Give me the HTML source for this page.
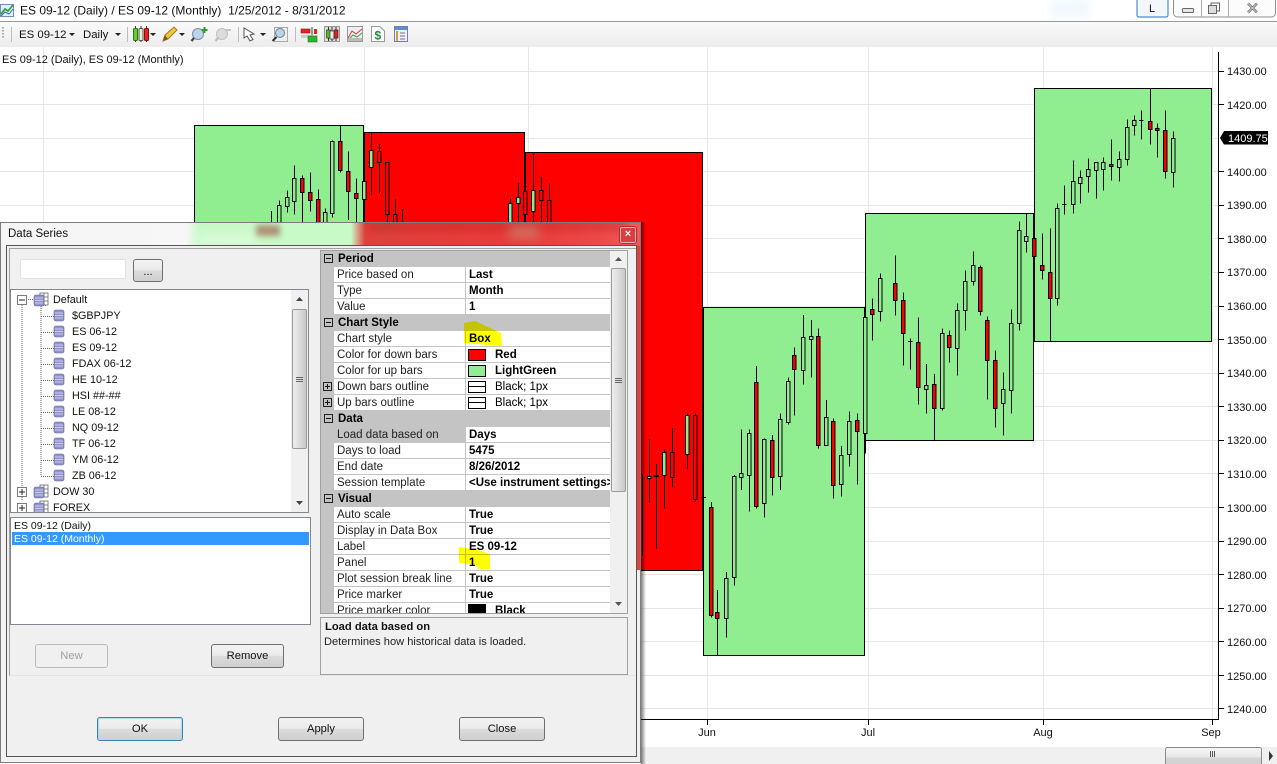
<!DOCTYPE html>
<html><head><meta charset="utf-8"><style>
html,body{margin:0;padding:0;background:#fff}
#p{position:relative;width:1277px;height:764px;overflow:hidden;background:#fff;font-family:"Liberation Sans",sans-serif;color:#000}
#p div,#p span{position:absolute;white-space:nowrap}
.btn{border:1px solid #707070;border-radius:3px;background:linear-gradient(#f3f3f3 0,#ebebeb 48%,#dcdcdc 50%,#cfcfcf 100%);text-align:center;font-size:11.2px;line-height:22px;box-sizing:border-box;color:#111}
.c{left:320px;width:290px;height:16px;background:#c4c4c4;font-weight:bold;font-size:11.5px;line-height:17px}
.c span{left:17px}
.pm{left:3px;top:3px;width:9px;height:9px;border:1px solid #222;box-sizing:border-box;background:#fff0}
.pm:before{content:"";position:absolute;left:1px;top:3px;width:5px;height:1px;background:#111}
.pp:after{content:"";position:absolute;left:3px;top:1px;width:1px;height:5px;background:#111}
.r{left:334px;width:276px;height:15px;background:#fff;border-bottom:1px solid #c4c4c4;font-size:11.5px;line-height:17px;color:#222}
.r span{left:3px}
.r b{position:absolute;left:135px;color:#000;font-weight:bold;white-space:nowrap}
.t{font-size:10.8px;line-height:18px;color:#111}
.sw{left:134px;top:2px;width:18px;height:12px;border:1px solid #000;box-sizing:border-box}
</style></head><body><div id="p">

<svg width="1277" height="764" style="position:absolute;left:0;top:0" font-family="Liberation Sans, sans-serif">
<defs>
<linearGradient id="tb" x1="0" y1="0" x2="0" y2="1"><stop offset="0" stop-color="#fafafa"/><stop offset="1" stop-color="#ececec"/></linearGradient>
<linearGradient id="lb" x1="0" y1="0" x2="0" y2="1"><stop offset="0" stop-color="#f7f7f7"/><stop offset=".5" stop-color="#e6e6e6"/><stop offset=".5" stop-color="#d6d6d6"/><stop offset="1" stop-color="#cfcfcf"/></linearGradient>
<filter id="bl"><feGaussianBlur stdDeviation="4"/></filter>
<linearGradient id="sh" x1="0" y1="0" x2="1" y2="0"><stop offset="0" stop-color="#000" stop-opacity=".5"/><stop offset="1" stop-color="#000" stop-opacity="0"/></linearGradient>
</defs>
<rect x="1050" y="0" width="40" height="18" fill="#f0f9fd" filter="url(#bl)"/>
<rect x="0" y="21" width="1277" height="1" fill="#9a9a9a"/>
<rect x="0" y="22" width="1277" height="25" fill="url(#tb)"/>
<!-- grid -->
<path stroke="#e6e6e6" fill="none" d="M0 71.500H1218M0 104.500H1218M0 138.500H1218M0 171.500H1218M0 205.500H1218M0 238.500H1218M0 272.500H1218M0 306.500H1218M0 339.500H1218M0 373.500H1218M0 406.500H1218M0 440.500H1218M0 473.500H1218M0 507.500H1218M0 541.500H1218M0 574.500H1218M0 608.500H1218M0 641.500H1218M0 675.500H1218M0 708.500H1218M43.500 47V719M203.500 47V719M364.500 47V719M528.500 47V719M707.500 47V719M868.500 47V719M1043.500 47V719M1212.500 47V719"/>
<!-- boxes -->
<g stroke="#000" stroke-width="1">
<rect x="194.500" y="125.500" width="169" height="400" fill="#90ee90"/>
<rect x="364.500" y="132.500" width="160" height="400" fill="#f00"/>
<rect x="525.500" y="152.500" width="177" height="418" fill="#f00"/>
<rect x="703.500" y="307.500" width="161" height="348" fill="#90ee90"/>
<rect x="865.500" y="213.500" width="168" height="227" fill="#90ee90"/>
<rect x="1034.500" y="88.500" width="177" height="253" fill="#90ee90"/>
</g>
<!-- candles: left -->
<g transform="translate(190,85) scale(.33333)" stroke="#000" stroke-width="3" shape-rendering="crispEdges">
<path fill="none" d="M244 378V420M268 346V420M292 316V383M313 241V389M337 271V420M361 262V380M385 313V420M406 370V420M427 166V398M451 122V263M475 199V405M499 280V420M544 142V332M568 178V326M592 232V420M616 343V420M637 372V420M961 340V420M985 292V420M1006 202V420"/>
<path fill="#90ee90" d="M262.500 361h11V420h-11zM286.500 337h11V364h-11zM307.500 280h11V349h-11zM400.500 382h11V420h-11zM421.500 169h11V385h-11zM517.500 289h11V343h-11zM538.500 196h11V247h-11zM955.500 355h11V420h-11zM979.500 337h11V355h-11z"/>
<path fill="#f00" d="M331.500 280h11V322h-11zM355.500 322h11V346h-11zM379.500 343h11V420h-11zM445.500 169h11V256h-11zM469.500 259h11V319h-11zM493.500 325h11V340h-11zM562.500 199h11V232h-11zM586.500 232h11V388h-11zM610.500 388h11V420h-11zM1000.500 319h11V388h-11z"/>
</g>
<g transform="translate(500,150) scale(.33333)" stroke="#000" stroke-width="3" shape-rendering="crispEdges">
<path fill="none" d="M100 8V220M124 79V220M148 100V220"/>
<path fill="#90ee90" d="M94.500 121h11V184h-11z"/>
<path fill="#f00" d="M118.500 121h11V151h-11zM142.500 151h11V220h-11z"/>
</g>
<!-- candles: June -->
<g transform="translate(640,300) scale(.33333)" stroke="#000" stroke-width="3" shape-rendering="crispEdges">
<path fill="none" d="M7 525V767M28 418V608M49 492V746M73 448V626M97 384V563M142 340V509M166 340V605M184 592H198M214 606V952M232 870V1066M259 816V1013M283 525V857M304 388V570M328 388V635M349 198V625M373 415V653M397 405V587M421 340V570M445 232V374M463 142V347M490 45V254M514 60V233M535 85V446M559 300V436M580 355V596M604 438V590M628 334V500M652 340V554M676 0V460"/>
<path fill="#90ee90" d="M22.500 529h11V535h-11zM67.500 457h11V526h-11zM136.500 346h11V463h-11zM253.500 835h11V955h-11zM277.500 529h11V832h-11zM298.500 520h11V532h-11zM322.500 400h11V526h-11zM367.500 418h11V610h-11zM415.500 358h11V529h-11zM439.500 244h11V367h-11zM484.500 112h11V211h-11zM508.500 109h11V118h-11zM553.500 352h11V436h-11zM598.500 466h11V553h-11zM622.500 364h11V463h-11zM670.500 52h11V400h-11z"/>
<path fill="#f00" d="M42.500 526h13V529h-13zM91.500 457h11V532h-11zM160.500 346h11V598h-11zM208.500 622h11V946h-11zM226.500 938h11V955h-11zM343.500 247h11V620h-11zM391.500 421h11V532h-11zM457.500 166h11V208h-11zM529.500 109h11V436h-11zM574.500 364h11V556h-11zM646.500 361h11V394h-11z"/>
</g>
<!-- candles: July -->
<g transform="translate(860,210) scale(.33333)" stroke="#000" stroke-width="3" shape-rendering="crispEdges">
<path fill="none" d="M37 265V392M61 190V335M106 136V317M130 247V467M151 385V479M144 394H158M175 322V584M199 462V611M223 492V690M247 355V602M268 361V458M292 280V497M316 181V362M340 124V227M361 166V317M382 319V569M406 421V653M430 487V677M454 298V611M478 34V362M499 10V127"/>
<path fill="#90ee90" d="M55.500 205h11V304h-11zM193.500 526h11V539h-11zM241.500 370h11V595h-11zM286.500 301h11V415h-11zM310.500 214h11V301h-11zM334.500 166h11V214h-11zM424.500 538h11V580h-11zM448.500 340h11V541h-11zM472.500 61h11V340h-11zM493.500 79h11V94h-11z"/>
<path fill="#f00" d="M31.500 298h11V313h-11zM100.500 220h11V271h-11zM124.500 271h11V371h-11zM169.500 397h11V532h-11zM217.500 523h11V595h-11zM262.500 376h11V412h-11zM355.500 172h11V304h-11zM376.500 331h11V451h-11zM400.500 451h11V595h-11z"/>
</g>
<!-- candles: Aug -->
<g transform="translate(1030,85) scale(.33333)" stroke="#000" stroke-width="3" shape-rendering="crispEdges">
<path fill="none" d="M37 445V584M61 430V769M82 355V662M103 301V389M96 358H110M130 226V386M151 256V356M175 220V323M199 232V341M220 217V317M244 163V287M268 199V290M292 103V242M313 91V152M334 76V164M327 107H341M361 10V179M382 115V218M406 76V281M430 139V308"/>
<path fill="#90ee90" d="M76.500 370h11V640h-11zM124.500 289h11V358h-11zM145.500 277h11V295h-11zM169.500 253h11V274h-11zM193.500 232h11V256h-11zM214.500 232h11V253h-11zM262.500 223h11V247h-11zM286.500 127h11V223h-11zM307.500 106h11V121h-11zM424.500 160h11V262h-11z"/>
<path fill="#f00" d="M7.500 460h11V515h-11zM31.500 541h11V556h-11zM55.500 562h11V640h-11zM238.500 238h11V244h-11zM355.500 109h11V133h-11zM376.500 130h11V136h-11zM400.500 136h11V259h-11z"/>
</g>
<!-- axes -->
<path stroke="#000" fill="none" d="M1218.500 52V720M640 719.500H1219M707.500 719V725M868.500 719V725M1043.500 719V725M1212.500 719V725M1218 71.500H1224M1218 104.500H1224M1218 171.500H1224M1218 205.500H1224M1218 238.500H1224M1218 272.500H1224M1218 306.500H1224M1218 339.500H1224M1218 373.500H1224M1218 406.500H1224M1218 440.500H1224M1218 473.500H1224M1218 507.500H1224M1218 541.500H1224M1218 574.500H1224M1218 608.500H1224M1218 641.500H1224M1218 675.500H1224M1218 708.500H1224"/>
<g font-size="11" fill="#111">
<text x="1227" y="75">1430.00</text><text x="1227" y="109">1420.00</text><text x="1227" y="176">1400.00</text><text x="1227" y="209">1390.00</text><text x="1227" y="243">1380.00</text><text x="1227" y="276">1370.00</text><text x="1227" y="310">1360.00</text><text x="1227" y="344">1350.00</text><text x="1227" y="377">1340.00</text><text x="1227" y="411">1330.00</text><text x="1227" y="444">1320.00</text><text x="1227" y="478">1310.00</text><text x="1227" y="512">1300.00</text><text x="1227" y="545">1290.00</text><text x="1227" y="579">1280.00</text><text x="1227" y="612">1270.00</text><text x="1227" y="646">1260.00</text><text x="1227" y="680">1250.00</text><text x="1227" y="713">1240.00</text>
<text x="707" y="736" text-anchor="middle">Jun</text><text x="868" y="736" text-anchor="middle">Jul</text><text x="1043" y="736" text-anchor="middle">Aug</text><text x="1211" y="736" text-anchor="middle">Sep</text>
<text x="2" y="63">ES 09-12 (Daily), ES 09-12 (Monthly)</text>
</g>
<path d="M1220 138L1224 131H1268V144.500H1224Z" fill="#000"/>
<text x="1228" y="142" font-size="11" fill="#fff">1409.75</text>
<!-- title -->
<g>
<rect x="0.500" y="4.500" width="13" height="12" fill="#dff0fa" stroke="#6f8fb5"/>
<path d="M1 14L5 9L8 11L13 5" stroke="#2e9a2e" stroke-width="1.600" fill="none"/>
<path d="M1 16L5 12L9 14L13 9" stroke="#3465b5" fill="none"/>
</g>
<text x="20" y="14.500" font-size="12" fill="#111">ES 09-12 (Daily) / ES 09-12 (Monthly)&#160; 1/25/2012 - 8/31/2012</text>
<!-- window buttons -->
<rect x="1137" y="-2" width="31" height="19" rx="2" fill="#f3f6fb" stroke="#4a8fd0" stroke-width="1.200"/>
<text x="1149" y="12" font-size="11" fill="#111">L</text>
<rect x="1173.500" y="-3" width="102" height="20" rx="4" fill="#fcfcfc" stroke="#8d8d8d"/>
<path d="M1201.500 0V17M1228.500 0V17" stroke="#aaa"/>
<rect x="1182.500" y="8.500" width="11" height="4" rx="1" fill="#e6e6e6" stroke="#666"/>
<rect x="1208.500" y="5.500" width="8" height="8" fill="#ddd" stroke="#666"/><path d="M1211 5V3H1219.500V11H1217" fill="none" stroke="#666"/>
<path d="M1248 3.500L1257 12.500M1257 3.500L1248 12.500" stroke="#666" stroke-width="2.400"/><path d="M1248 3.500L1257 12.500M1257 3.500L1248 12.500" stroke="#e6e6e6" stroke-width=".8"/>
<!-- toolbar -->
<path d="M3 27V38" stroke="#aaa" stroke-dasharray="1.500 1.500" stroke-width="2"/>
<path d="M11.500 27V42M127.500 27V42M238.500 27V42M295.500 27V42" stroke="#bdbdbd"/>
<g font-size="11.400" fill="#111"><text x="19" y="38">ES 09-12</text><text x="83" y="38">Daily</text></g>
<path d="M69 33h6l-3 3zM115 33h6l-3 3zM150 33h6l-3 3zM179 33h6l-3 3zM260 33h6l-3 3z" fill="#222"/>
<!-- candles icon -->
<path d="M135.500 26V42M141 26V42M146.500 26V42" stroke="#333"/>
<rect x="133.500" y="28.500" width="4" height="12" rx="1" fill="#5fd02e" stroke="#2a7a10"/><rect x="139" y="28.500" width="4" height="12" rx="1" fill="#e8f0d0" stroke="#555"/><rect x="144.500" y="28.500" width="4" height="12" rx="1" fill="#ee2020" stroke="#801010"/>
<!-- pencil -->
<path d="M163 41L165 35L174 27L177 30L168 39Z" fill="#f2c83a" stroke="#9a7a20"/><path d="M163 41L165 35L168 39Z" fill="#7a5a20"/>
<!-- zoom-in -->
<circle cx="198" cy="34" r="5.500" fill="#bcd4ea" stroke="#7a8ea2"/><path d="M194 38L191.500 41" stroke="#444" stroke-width="2.200"/><path d="M204.500 27V33M201.500 30H207.500" stroke="#2aa02a" stroke-width="2"/>
<!-- zoom-out -->
<circle cx="222" cy="34" r="5.500" fill="#dcdcdc" stroke="#c0c0c0"/><path d="M218 38L215.500 41" stroke="#bbb" stroke-width="2.200"/><path d="M225 30H231" stroke="#c4c4c4" stroke-width="2"/>
<!-- cursor -->
<path d="M244 28L244 38L247 36L250 41L253 39.500L250 35L254 34Z" fill="#fff" stroke="#555"/>
<!-- magnifier in box -->
<rect x="274.500" y="27.500" width="13" height="14" fill="#eee" stroke="#aaa"/><circle cx="280" cy="33" r="4.500" fill="#bcd4ea" stroke="#6b7f92"/><path d="M276.500 37L272.500 41" stroke="#333" stroke-width="2"/>
<!-- tools -->
<path d="M312 27V42" stroke="#444"/><rect x="301" y="29" width="9" height="4" fill="#ee2020" stroke="#a01010" stroke-width=".6"/><rect x="301" y="35" width="12" height="3" fill="#ccc"/><rect x="308" y="36" width="9" height="6" fill="#30b030" stroke="#1a7a1a" stroke-width=".6"/><rect x="314" y="29" width="3" height="5" fill="#ee2020"/>
<rect x="324.500" y="26.500" width="15" height="15" fill="#ddd" stroke="#999"/><path d="M328.500 27V41M332 27V41M336 27V41" stroke="#333"/><rect x="326.500" y="30" width="4" height="8" fill="#50c020" stroke="#222" stroke-width=".6"/><rect x="330" y="31" width="4" height="8" fill="#eee" stroke="#222" stroke-width=".6"/><rect x="334" y="30" width="4" height="8" fill="#e02020" stroke="#222" stroke-width=".6"/>
<rect x="347.500" y="26.500" width="15" height="15" fill="#eee" stroke="#999"/><path d="M348 38L352 31L356 34L362 29" stroke="#d04040" fill="none"/><path d="M348 40L353 35L357 37L362 33" stroke="#40a040" fill="none"/><rect x="348" y="38" width="14" height="3" fill="#bbb"/>
<path d="M371.500 26.500H380L384.500 31V41.500H371.500Z" fill="#fff" stroke="#999"/><text x="374.500" y="39.500" font-size="12" font-weight="bold" fill="#1f8a3a">$</text>
<rect x="394.500" y="26.500" width="13" height="15" fill="#eef" stroke="#7a7ab0"/><rect x="395" y="27" width="12" height="3" fill="#5a8fd0"/><path d="M397 31V41" stroke="#d0a030" stroke-width="2"/><path d="M400 33H405M400 36H405M400 39H405" stroke="#777"/>
<!-- bottom bar -->
<rect x="641" y="747" width="636" height="17" fill="#f0f0f0"/>
<rect x="1165.500" y="747.500" width="96" height="20" rx="2" fill="url(#lb)" stroke="#8a8a8a"/>
<path d="M1210.500 751V757M1212.500 751V757M1214.500 751V757" stroke="#555"/>
<path d="M1269 751L1273 756L1269 761Z" fill="#333"/>
<!-- dialog shadow -->
<rect x="641" y="222" width="5" height="542" fill="url(#sh)"/>
</svg>

<!-- DIALOG -->
<div style="left:0;top:222px;width:641px;height:541px;border:1px solid #7c7c7c;box-sizing:border-box;background:linear-gradient(90deg,#f3f3f3 0,#f3f3f3 30px,#f0f0f0 100%);overflow:hidden"></div>
<!-- glass title -->
<div style="left:1px;top:223px;width:639px;height:23px;background:linear-gradient(90deg,#f5f5f5 0,#f7f7f7 185px,#c6f9c6 198px,#c8fac8 350px,#e0403c 364px,#e93a3a 520px,#ee4a4a 600px,#f05a5a 100%);overflow:hidden">
<div style="left:255px;top:2px;width:24px;height:11px;background:#a88068;filter:blur(3px);opacity:.85"></div>
<div style="left:375px;top:0;width:22px;height:10px;background:#c05040;filter:blur(4px);opacity:.5"></div>
<div style="left:195px;top:12px;width:60px;height:10px;background:#fff;filter:blur(5px);opacity:.4"></div>
<div style="left:366px;top:0;width:260px;height:8px;background:#c01818;filter:blur(4px);opacity:.4"></div>
<div style="left:508px;top:2px;width:30px;height:14px;background:#c0a080;filter:blur(5px);opacity:.5"></div>
</div>
<div style="left:8px;top:226px;font-size:11.500px;line-height:16px;color:#111">Data Series</div>
<div style="left:620px;top:227px;width:16px;height:16px;box-sizing:border-box;border:1px solid #f4b0b0;border-radius:2px;background:#d84040;color:#fff;font-size:11px;font-weight:bold;text-align:center;line-height:13px;box-shadow:0 0 0 1px #b03030">×</div>
<!-- inner -->
<div style="left:6px;top:245px;width:631px;height:512px;box-sizing:border-box;border:1px solid #555;background:#f0f0f0"></div>
<!-- right frame glass -->
<div style="left:637px;top:246px;width:3px;height:324px;background:#e04040"></div>
<div style="left:9px;top:248px;width:627px;height:428px;box-sizing:border-box;border:1px solid #a0a0a0;border-right:0;border-bottom:1px solid #e4e4e4;background:#f0f0f0"></div>

<!-- search -->
<div style="left:20px;top:259px;width:106px;height:20px;box-sizing:border-box;background:#fff;border:1px solid #e2e2e2;border-radius:2px"></div>
<div class="btn" style="left:133px;top:259px;width:30px;height:23px;font-size:11px;line-height:24px">...</div>

<!-- tree -->
<div style="left:10px;top:289px;width:299px;height:224px;box-sizing:border-box;border:1px solid #828790;background:#fff;overflow:hidden">
<svg width="297" height="222" style="position:absolute;left:0;top:0">
<defs>
<g id="db"><rect x="0" y="0" width="10" height="11" rx="2" fill="#8f93cc" stroke="#5f6390" stroke-width=".6"/><path d="M1 3H9M1 5.500H9M1 8H9" stroke="#dfe0f4" stroke-width=".8"/></g>
<g id="dbt"><rect x="6" y="0" width="8" height="12" fill="#fff" stroke="#666" stroke-width=".8"/><path d="M10 0V12M6 4H14M6 8H14" stroke="#666" stroke-width=".8"/><use href="#db" y="1" transform="translate(0,1)"/></g>
</defs>
<path stroke="#666" stroke-dasharray="1 1" fill="none" d="M11 15V210M30 14V186M30 15.500H36M17 9.500H23M30 26.500H43M30 42.500H43M30 58.500H43M30 74.500H43M30 90.500H43M30 106.500H43M30 122.500H43M30 138.500H43M30 154.500H43M30 170.500H43M30 186.500H43"/>
<g fill="#fff" stroke="#7a7a7a"><rect x="6.500" y="5.500" width="9" height="9"/><rect x="6.500" y="197.500" width="9" height="9"/><rect x="6.500" y="213.500" width="9" height="9"/></g>
<path d="M8 10H14M8 202H14M11 199V205M8 218H14M11 215V221" stroke="#222"/>
<use href="#dbt" x="23" y="3"/><use href="#dbt" x="23" y="195"/><use href="#dbt" x="23" y="211"/>
<use href="#db" x="43" y="20"/><use href="#db" x="43" y="36"/><use href="#db" x="43" y="52"/><use href="#db" x="43" y="68"/><use href="#db" x="43" y="84"/><use href="#db" x="43" y="100"/><use href="#db" x="43" y="116"/><use href="#db" x="43" y="132"/><use href="#db" x="43" y="148"/><use href="#db" x="43" y="164"/><use href="#db" x="43" y="180"/>
</svg>
<div class="t" style="left:42px;top:1px">Default</div>
<div class="t" style="left:61px;top:17px">$GBPJPY</div>
<div class="t" style="left:61px;top:33px">ES 06-12</div>
<div class="t" style="left:61px;top:49px">ES 09-12</div>
<div class="t" style="left:61px;top:65px">FDAX 06-12</div>
<div class="t" style="left:61px;top:81px">HE 10-12</div>
<div class="t" style="left:61px;top:97px">HSI ##-##</div>
<div class="t" style="left:61px;top:113px">LE 08-12</div>
<div class="t" style="left:61px;top:129px">NQ 09-12</div>
<div class="t" style="left:61px;top:145px">TF 06-12</div>
<div class="t" style="left:61px;top:161px">YM 06-12</div>
<div class="t" style="left:61px;top:177px">ZB 06-12</div>
<div class="t" style="left:42px;top:193px">DOW 30</div>
<div class="t" style="left:42px;top:209px">FOREX</div>
<!-- scrollbar -->
<div style="left:280px;top:0;width:17px;height:222px;background:#f0f0f0"></div>
<div style="left:281px;top:19px;width:15px;height:140px;box-sizing:border-box;border:1px solid #9a9a9a;border-radius:2px;background:linear-gradient(90deg,#eee,#dcdcdc 50%,#c8c8c8)"></div>
<svg width="17" height="222" style="position:absolute;left:280px;top:0"><path d="M5 11L8.500 7L12 11ZM5 211L12 211L8.500 215Z" fill="#444"/><path d="M5 87.500H12M5 89.500H12M5 91.500H12" stroke="#666"/></svg>
</div>

<!-- list -->
<div style="left:10px;top:517px;width:301px;height:108px;box-sizing:border-box;border:1px solid #828790;background:#fff">
<div style="left:3px;top:2px;font-size:10.500px;line-height:13px;color:#111">ES 09-12 (Daily)</div>
<div style="left:1px;top:14px;width:297px;height:13px;background:#3399ff"></div>
<div style="left:3px;top:15px;font-size:10.500px;line-height:13px;color:#fff">ES 09-12 (Monthly)</div>
</div>

<div class="btn" style="left:35px;top:644px;width:73px;height:24px;color:#a0a0a0;border-color:#bbb;background:#f0f0f0">New</div>
<div class="btn" style="left:211px;top:644px;width:73px;height:24px">Remove</div>
<div class="btn" style="left:97px;top:717px;width:86px;height:24px;border-color:#3c7fb1;box-shadow:0 0 1px 1px #a8dcf0 inset">OK</div>
<div class="btn" style="left:278px;top:717px;width:86px;height:24px">Apply</div>
<div class="btn" style="left:459px;top:717px;width:86px;height:24px">Close</div>

<!-- property grid -->
<div style="left:320px;top:250px;width:308px;height:364px;box-sizing:border-box;border:1px solid #a0a0a0;background:#c4c4c4;overflow:hidden"></div>
<div style="left:321px;top:251px;width:306px;height:362px;overflow:hidden">
<div style="left:0;top:0;width:306px;height:362px;transform:translate(-321px,-251px)">
<div class="c" style="top:251px;left:321px;width:289px"><i class="pm" style="position:absolute"></i><span>Period</span></div>
<div class="r" style="top:267px"><span>Price based on</span><b>Last</b></div>
<div class="r" style="top:283px"><span>Type</span><b>Month</b></div>
<div class="r" style="top:299px"><span>Value</span><b>1</b></div>
<div class="c" style="top:315px;left:321px;width:289px"><i class="pm" style="position:absolute"></i><span>Chart Style</span></div>
<div class="r" style="top:331px"><span>Chart style</span><b>Box</b></div>
<div class="r" style="top:347px"><span>Color for down bars</span><div class="sw" style="background:#f00"></div><b style="left:161px">Red</b></div>
<div class="r" style="top:363px"><span>Color for up bars</span><div class="sw" style="background:#90ee90"></div><b style="left:161px">LightGreen</b></div>
<div class="r" style="top:379px"><span>Down bars outline</span><div class="sw" style="background:linear-gradient(#fff 4px,#000 4px,#000 5px,#fff 5px)"></div><b style="left:161px;font-weight:normal">Black; 1px</b></div>
<div class="r" style="top:395px"><span>Up bars outline</span><div class="sw" style="background:linear-gradient(#fff 4px,#000 4px,#000 5px,#fff 5px)"></div><b style="left:161px;font-weight:normal">Black; 1px</b></div>
<i class="pm pp" style="position:absolute;left:323px;top:382px"></i>
<i class="pm pp" style="position:absolute;left:323px;top:398px"></i>
<div class="c" style="top:411px;left:321px;width:289px"><i class="pm" style="position:absolute"></i><span>Data</span></div>
<div class="r" style="top:427px"><div style="left:0;top:0;width:131px;height:15px;background:#c4c4c4"></div><span>Load data based on</span><b>Days</b></div>
<div class="r" style="top:443px"><span>Days to load</span><b>5475</b></div>
<div class="r" style="top:459px"><span>End date</span><b>8/26/2012</b></div>
<div class="r" style="top:475px;overflow:hidden"><span>Session template</span><b>&lt;Use instrument settings&gt;</b></div>
<div class="c" style="top:491px;left:321px;width:289px"><i class="pm" style="position:absolute"></i><span>Visual</span></div>
<div class="r" style="top:507px"><span>Auto scale</span><b>True</b></div>
<div class="r" style="top:523px"><span>Display in Data Box</span><b>True</b></div>
<div class="r" style="top:539px"><span>Label</span><b>ES 09-12</b></div>
<div class="r" style="top:555px"><span>Panel</span><b>1</b></div>
<div class="r" style="top:571px"><span>Plot session break line</span><b>True</b></div>
<div class="r" style="top:587px"><span>Price marker</span><b>True</b></div>
<div class="r" style="top:603px"><span>Price marker color</span><div class="sw" style="background:#000;top:1px;height:13px"></div><b style="left:161px">Black</b></div>
<div style="left:465px;top:267px;width:1px;height:346px;background:#c4c4c4"></div>
<!-- scrollbar -->
<div style="left:610px;top:251px;width:17px;height:362px;background:#f0f0f0"></div>
<div style="left:611px;top:268px;width:15px;height:224px;box-sizing:border-box;border:1px solid #9a9a9a;border-radius:2px;background:linear-gradient(90deg,#eee,#dcdcdc 50%,#c8c8c8)"></div>
<svg width="17" height="362" style="position:absolute;left:610px;top:251px"><path d="M5 10L8.500 6L12 10ZM5 351L12 351L8.500 355Z" fill="#555"/><path d="M5 127.500H12M5 129.500H12M5 131.500H12" stroke="#666"/></svg>
</div></div>

<!-- highlights -->
<svg width="641" height="764" style="position:absolute;left:0;top:0;mix-blend-mode:multiply">
<path d="M464 323L475 321L488 327L501 333L502 346L464 343Z" fill="#ffff00"/>
<path d="M459 547L478 550L490 554L490 569L478 569L477 565L459 563Z" fill="#ffff00"/>
</svg>

<!-- help -->
<div style="left:320px;top:617px;width:308px;height:58px;box-sizing:border-box;border:1px solid #a0a0a0;background:#f0f0f0">
<div style="left:4px;top:2px;font-size:11.200px;line-height:14px;font-weight:bold;color:#111">Load data based on</div>
<div style="left:3px;top:17px;font-size:11.100px;line-height:14px;color:#222">Determines how historical data is loaded.</div>
</div>
</div></body></html>
